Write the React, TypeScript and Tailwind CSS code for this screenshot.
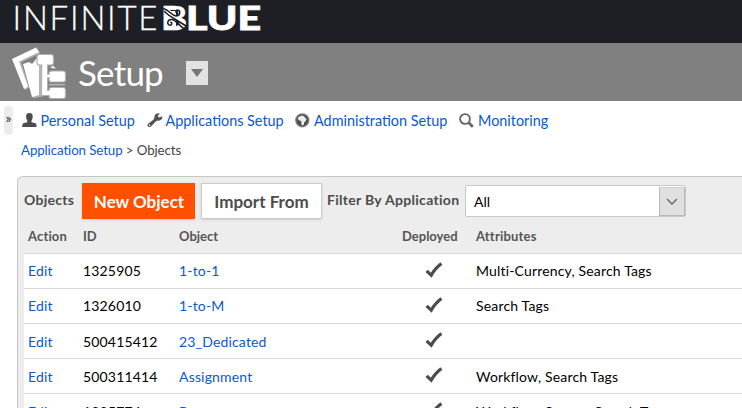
import React from "react";

const link = "text-[#0a59d0]";

function Logo() {
  return (
    <svg className="ml-3 block overflow-visible" width="252" height="43" viewBox="12 0 252 43" role="img" aria-label="Infinite Blue">
      <text x="12.5" y="29.8" fill="#fff" stroke="#fff" strokeWidth="0.3" fontFamily="Lato, sans-serif" fontWeight="300" fontSize="33" textLength="145" lengthAdjust="spacing">INFINITE</text>
      <text x="161" y="29.8" fill="#fff" stroke="#fff" strokeWidth="0.6" fontFamily="Lato, sans-serif" fontWeight="900" fontSize="33" textLength="26" lengthAdjust="spacingAndGlyphs">B</text>
      <text x="186" y="29.8" fill="#fff" stroke="#fff" strokeWidth="0.8" fontFamily="Lato, sans-serif" fontWeight="900" fontSize="33" textLength="75" lengthAdjust="spacingAndGlyphs">LUE</text>
      <path d="M168 11H176V26H168Z" fill="#fff" />
      <g fill="none" stroke="#1e1f25" strokeWidth="1.5" strokeLinecap="round">
        <path d="M163 8.5C169 9.5 171 15.5 176 16C180.5 16 181 10.2 177.6 10C175.6 10 175.3 12.4 176.8 12.9" />
        <path d="M164.5 11.5C170 17.5 178 20 186.5 26.5" />
        <path d="M186 29.5C180 27.5 177 20.5 172 19.5C167 19 166.5 25 170 25.3C172.3 25.3 172.3 22.6 170.8 22.3" />
      </g>
    </svg>
  );
}

function SetupIcon() {
  return (
    <svg className="block shrink-0" width="56" height="54" viewBox="0 0 56 54">
      <g fill="#b4b4b4" transform="translate(1.2 1.3)">
        <path d="M0 13L24 1.5L27 6L8 15L16 40L12 43Z" />
        <path d="M12 18L17 16L20 18L25 12L30 20V49L20 51Z" />
      </g>
      <path fill="#fff" d="M0 13L24 1.5L27 6L7 15.5L16 40.5L12 43Z" />
      <path fill="#fff" d="M11 18L17 16L20 18L25 12L27 20V49L20 51Z" />
      <g fill="#fff" stroke="#b0b0b0" strokeWidth="1.2">
        <path d="M30 18H35.5V28H39V31.5H35.5V44.5H39V49.5H29.5Z" />
        <rect x="25" y="8.5" width="16.5" height="10.5" rx="2.5" />
        <rect x="37" y="25" width="16.5" height="11" rx="2.5" />
        <rect x="37" y="41.5" width="16.5" height="11" rx="2.5" />
      </g>
      <path d="M30.5 17H35V29H39V31H35V45H39V49H30.5Z" fill="#fff" />
      <path d="M37 38.7H53" stroke="#c2c2c2" strokeWidth="1.2" />
      <path d="M38 22L44 22.5L41 19.5Z" fill="#eee" />
    </svg>
  );
}

function UserIcon() {
  return (
    <svg className="block" width="15" height="15" viewBox="0 0 15 15">
      <path fill="#4c4c4c" d="M7.4 0C9.8 0 10.9 1.6 10.7 4C10.6 6 9.9 7 9.4 7.9V9C10.4 9.6 12.8 9.8 13.8 10.6C14.4 11.4 14.6 13 14.6 14H0.2C.2 13 .4 11.4 1 10.6C2 9.8 4.4 9.6 5.4 9V7.9C4.9 7 4.2 6 4.1 4C3.9 1.6 5 0 7.4 0Z" />
    </svg>
  );
}

function WrenchIcon() {
  return (
    <svg className="block" width="16" height="15" viewBox="0 0 16 15">
      <path fill="#555" d="M12.8.5L10.7 3.1L12.2 4.6L15.3 3.2C15.9 6.2 13.5 8.3 10.6 7.5L8.7 8.5L4.5 12.9C3.6 14.2 2 14.5 1 13.6C0 12.6.4 11.2 1.5 10.5L6.4 6.7L7.4 4.6C6.9 1.7 9.9-.4 12.8.5ZM2.6 11.4A.8.8 0 1 0 2.6 13A.8.8 0 0 0 2.6 11.4Z" />
    </svg>
  );
}

function GlobeIcon() {
  return (
    <svg className="block" width="15" height="15" viewBox="0 0 15 15">
      <circle cx="7.3" cy="7.3" r="6.4" fill="#4d4d4d" stroke="#777" strokeWidth="1.4" />
      <path fill="#eee" d="M4 3.8L7 2.6L9.7 3.7L10 5L11.6 5.8L10.8 8L9.3 9.3L8.6 11.9L6.9 12.5L6.2 10L6.3 8.1L3.7 7.2L2.7 5.3Z" />
    </svg>
  );
}

function SearchIcon() {
  return (
    <svg className="block" width="15" height="15" viewBox="0 0 15 15" fill="none" stroke="#666">
      <circle cx="6" cy="6" r="4.9" strokeWidth="1.9" />
      <path d="M9.7 9.7L13.8 13.8" strokeWidth="2.7" />
    </svg>
  );
}

function Check() {
  return (
    <svg className="block" width="18" height="16" viewBox="0 0 18 16">
      <path d="M1.6 8.8L6.2 13.2C8.5 8.8 11.8 5 16.4 1.4" fill="none" stroke="#4c4c4c" strokeWidth="3.2" />
    </svg>
  );
}

const menu = [
  { label: "Personal Setup", icon: <UserIcon />, box: "w-[125px]", gap: "w-[18.5px]" },
  { label: "Applications Setup", icon: <WrenchIcon />, box: "w-[148px]", gap: "w-[18.5px]" },
  { label: "Administration Setup", icon: <GlobeIcon />, box: "w-[164px]", gap: "w-[19px]" },
  { label: "Monitoring", icon: <SearchIcon />, box: "w-[110px]", gap: "w-[19px]" },
];

const rows = [
  { id: "1325905", name: "1-to-1", attrs: "Multi-Currency, Search Tags", line: "leading-[33px]" },
  { id: "1326010", name: "1-to-M", attrs: "Search Tags", line: "leading-[33px]" },
  { id: "500415412", name: "23_Dedicated", attrs: "", line: "leading-[35px]" },
  { id: "500311414", name: "Assignment", attrs: "Workflow, Search Tags", line: "leading-[35px]" },
  { id: "1325774", name: "Bcp", attrs: "Workflow, Survey, Search Tags", line: "leading-[35px]" },
];

const columns = "grid grid-cols-[55px_96px_218px_79px_1fr] pl-[4px]";

export default function App() {
  return (
    <div className="h-[408px] w-[742px] overflow-hidden bg-white font-['Lato',sans-serif] text-[14px] text-black">
      <header>
        <div className="h-[43px] bg-[#1e1f25]"><Logo /></div>
        <div className="flex h-[58px] items-start bg-[#808081] pl-3 pt-[3px]">
          <SetupIcon />
          <h1 className="ml-[10px] mt-[5px] w-[108px] text-[35px] leading-[42px] tracking-[-0.8px] text-white">Setup</h1>
          <button className="mt-[15px] flex h-6 w-[22px] items-center justify-center bg-[#e2e2e2]" aria-label="Menu">
            <svg width="12" height="8" viewBox="0 0 12 8"><path d="M0 0H12L6 8Z" fill="#777" /></svg>
          </button>
        </div>
      </header>

      <div className="flex h-[33px]">
        <div className="ml-1 mt-[5px] flex h-[29px] w-[9px] shrink-0 justify-center rounded-[4px] bg-[#ececec] pt-[3px] text-[14px] leading-[17px] text-[#333]">»</div>
        <nav className="flex items-start pl-[9px] pt-[9px]">
          {menu.map((m) => (
            <a key={m.label} className={`flex shrink-0 items-center whitespace-nowrap text-[14.4px] leading-[21px] ${m.box} ${link}`}>
              <span className={`shrink-0 ${m.gap}`}>{m.icon}</span>
              {m.label}
            </a>
          ))}
        </nav>
      </div>

      <div className="h-[42px] pl-[21px] pt-[6px] text-[13.3px] leading-5 tracking-[-0.1px] text-[#444]">
        <a className={link}>Application Setup</a> &gt; Objects
      </div>

      <main className="ml-[17px] h-[240px] rounded-tl-[6px] border-l border-t border-[#c6c6c6] bg-[#ededed] pl-[6px]">
        <div className="flex h-[48px] items-start pt-[6px] font-bold text-[#4c4c4c]">
          <span className="w-[58px] pt-[7px] leading-5 tracking-[0.25px]">Objects</span>
          <button className="h-9 w-[113px] bg-[#ff5000] pl-[1px] pt-[1px] text-[17px] text-white shadow-sm">New Object</button>
          <button className="ml-[6px] h-9 w-[121px] border border-[#ccc] bg-white pt-[2px] text-[17px] shadow-sm">Import From</button>
          <span className="ml-[5px] w-[138px] whitespace-nowrap pt-[7px] leading-5 tracking-[0.3px]">Filter By Application</span>
          <div className="mt-[2px] flex h-8 w-[221px] justify-between rounded-[2px] border border-[#c8c8c8] bg-white pt-px font-normal text-black">
            <span className="pl-[8px] leading-[29px]">All</span>
            <span className="flex w-[26px] items-center justify-center border border-[#b8b8b8] border-t-[#d0d0d0] bg-[#e0e0e0]">
              <svg width="12" height="8" viewBox="0 0 12 8"><path d="M1 1L6 6L11 1" fill="none" stroke="#666" strokeWidth="1.4" /></svg>
            </span>
          </div>
        </div>
        <div className={`h-7 text-[13px] font-bold leading-[23px] text-[#555] ${columns}`}>
          <span className="tracking-[0.15px]">Action</span><span>ID</span><span>Object</span><span className="pl-[5px]">Deployed</span><span className="tracking-[0.2px]">Attributes</span>
        </div>
        {rows.map((r) => (
          <div key={r.id} className={`h-[35px] border-t border-[#d8d8d8] bg-white tracking-[0.17px] ${r.line} ${columns}`}>
            <a className={link}>Edit</a>
            <span>{r.id}</span>
            <a className={link}>{r.name}</a>
            <span className="pl-[28px] pt-[8px]"><Check /></span>
            <span>{r.attrs}</span>
          </div>
        ))}
      </main>
    </div>
  );
}
